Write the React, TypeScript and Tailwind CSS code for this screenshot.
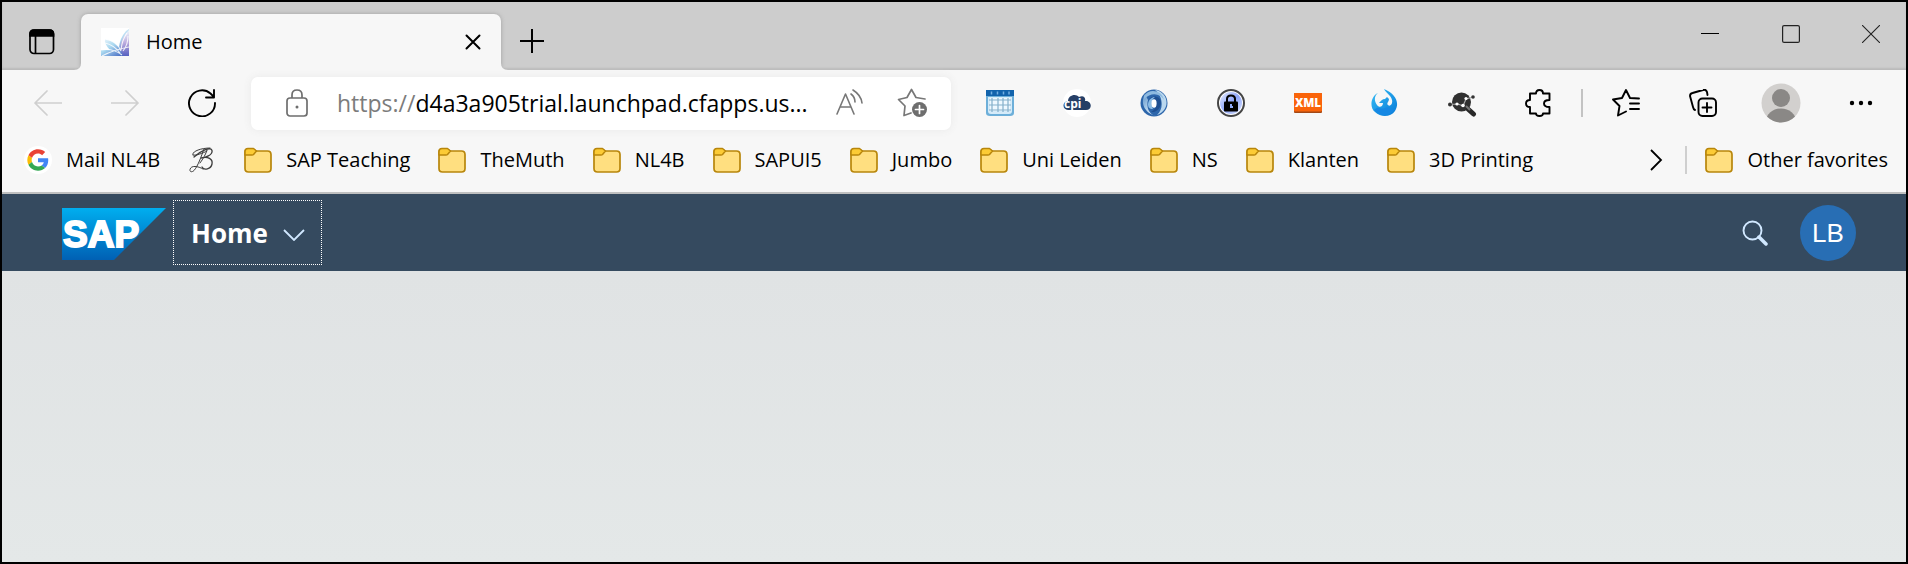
import type { ReactNode } from "react";

const folders = ["SAP Teaching", "TheMuth", "NL4B", "SAPUI5", "Jumbo", "Uni Leiden", "NS", "Klanten", "3D Printing"];

function FolderIcon() {
  return (
    <svg width="28" height="26" viewBox="0 0 28 26" className="shrink-0" aria-hidden="true">
      <path d="M1 5Q1 2 4 2H9L12 4H23.500Q27 4 27 7.500V21.500Q27 25 23.500 25H4.500Q1 25 1 21.500Z" fill="#ffdf80" stroke="#b8860b" strokeWidth="1.700" />
      <path d="M1 4.500Q1 1.500 4 1.500H9.500L12.500 4L9.500 7.500Q9 8 8 8H1Z" fill="#fccb35" stroke="#b8860b" strokeWidth="1.500" strokeLinejoin="round" />
    </svg>
  );
}

function GoogleIcon() {
  return (
    <svg width="28" height="28" viewBox="0 0 28 28" className="shrink-0" aria-hidden="true">
      <circle cx="14" cy="14" r="14" fill="#fff" />
      <g transform="translate(3.300 3.300) scale(.446)">
        <path fill="#EA4335" d="M24 9.500c3.540 0 6.710 1.220 9.210 3.600l6.850-6.850C35.900 2.380 30.470 0 24 0 14.620 0 6.510 5.380 2.560 13.220l7.980 6.190C12.430 13.720 17.740 9.500 24 9.500z" />
        <path fill="#4285F4" d="M46.980 24.550c0-1.570-.15-3.090-.38-4.550H24v9.020h12.940c-.58 2.960-2.260 5.480-4.780 7.180l7.730 6c4.510-4.180 7.090-10.360 7.090-17.650z" />
        <path fill="#FBBC05" d="M10.530 28.590c-.48-1.450-.76-2.990-.76-4.590s.27-3.140.76-4.590l-7.980-6.190C.92 16.460 0 20.120 0 24c0 3.880.92 7.540 2.560 10.780l7.970-6.190z" />
        <path fill="#34A853" d="M24 48c6.480 0 11.930-2.130 15.890-5.810l-7.730-6c-2.150 1.450-4.920 2.300-8.160 2.300-6.260 0-11.570-4.220-13.470-9.910l-7.980 6.190C6.510 42.620 14.620 48 24 48z" />
      </g>
    </svg>
  );
}

function ScriptBIcon() {
  return (
    <svg width="28" height="28" viewBox="0 0 28 28" fill="none" stroke="#3d3d3d" strokeWidth="1" strokeLinecap="round" aria-hidden="true">
      <path d="M5 9C3 6 12 2 22 2M16 3C13 11 10 20 6 24.500C4 26.500 1.500 26 2 23.500C3 19 10 20 15 23" />
      <path d="M6 11C12 5 23 0 24 4.500C25 9 17 12 13 12C20 10 25 13 24 18C23 23 16 25 14 21" strokeWidth="1.300" />
      <path d="M19 4C18 8 15 13 12 17M5 9C8 10 15 7 19 5" />
    </svg>
  );
}

function ToolButton({ label, children, disabled, wide }: { label: string; children: ReactNode; disabled?: boolean; wide?: boolean }) {
  return (
    <button type="button" aria-label={label} disabled={disabled} className={`flex h-14 shrink-0 items-center justify-center ${wide ? "w-20" : "w-[77px]"}`}>
      {children}
    </button>
  );
}

function Line({ children, size = 28, color = "#000", width = 1.7 }: { children: ReactNode; size?: number; color?: string; width?: number }) {
  return (
    <svg width={size} height={size} viewBox={`0 0 ${size} ${size}`} fill="none" stroke={color} strokeWidth={width} strokeLinecap="round" strokeLinejoin="round" aria-hidden="true">
      {children}
    </svg>
  );
}

function TitleBar() {
  return (
    <div className="flex h-[68px] bg-[#cdcdcd] shadow-[inset_0_-2px_2px_#bababa]">
      <button type="button" aria-label="Tab actions" className="flex w-[79px] items-center justify-center pt-3">
        <svg width="26" height="26" viewBox="0 0 26 26" fill="none" stroke="#000" strokeWidth="1.700" aria-hidden="true">
          <rect x="1" y="1" width="23.500" height="23.500" rx="4" />
          <path d="M1 7V5Q1 1 5 1H20.500Q24.500 1 24.500 5V7Z" fill="#000" />
          <path d="M6.500 7V24" />
        </svg>
      </button>
      <div className="relative mt-3 flex w-[420px] items-center rounded-t-[7px] bg-[#f7f7f7] pl-5 pr-4 shadow-[0_0_4px_#a0a0a0] [clip-path:inset(-5px_-7px_0_-7px)]">
        <svg width="7" height="7" viewBox="0 0 7 7" className="absolute -left-[7px] bottom-0" aria-hidden="true"><path d="M7 0V7H0Q7 7 7 0Z" fill="#f7f7f7" /></svg>
        <svg width="7" height="7" viewBox="0 0 7 7" className="absolute -right-[7px] bottom-0" aria-hidden="true"><path d="M0 0V7H7Q0 7 0 0Z" fill="#f7f7f7" /></svg>
        <svg width="28" height="28" viewBox="0 0 28 28" aria-hidden="true">
          <defs>
            <linearGradient id="tabFade" x1="0" y1="0" x2="0.700" y2="1">
              <stop offset=".2" stopColor="#fff" />
              <stop offset=".6" stopColor="#a9d8f0" />
              <stop offset="1" stopColor="#4b6fc4" />
            </linearGradient>
            <linearGradient id="tabPurple" x1="0" y1="0" x2="0" y2="1">
              <stop offset="0" stopColor="#fff" />
              <stop offset=".5" stopColor="#c8a8dd" />
              <stop offset="1" stopColor="#5a5fc0" />
            </linearGradient>
          </defs>
          <rect width="28" height="28" fill="#fff" />
          <path d="M0 28V22Q5 22 9 22Q3 16 4 11Q12 12 18 19Q19 10 25 3L28 1V28Z" fill="url(#tabFade)" />
          <path d="M19 20Q20 9 28 2V28H22Z" fill="url(#tabPurple)" opacity=".8" />
          <path d="M4 11Q16 13 20 23M4 15Q13 17 19 25M0 22Q12 20 21 27M20 22Q21 12 26 5M22 23Q27 17 27 8M1 28Q12 22 28 19" fill="none" stroke="#fff" strokeWidth="1.100" opacity=".85" />
        </svg>
        <span className="ml-[17px] flex-1 text-[20px] leading-7">Home</span>
        <button type="button" aria-label="Close tab" className="flex size-6 items-center justify-center">
          <Line size={16} width={2}><path d="M1.500 1.500L14.500 14.500M14.500 1.500L1.500 14.500" /></Line>
        </button>
      </div>
      <button type="button" aria-label="New tab" className="flex w-[62px] items-center justify-center pt-2.5">
        <Line size={24} width={2}><path d="M12 0V24M0 12H24" /></Line>
      </button>
      <div className="ml-auto flex items-start">
        <button type="button" aria-label="Minimize" className="flex h-16 w-[72px] items-center justify-center"><Line size={18} width={1}><path d="M0 8.500H18" /></Line></button>
        <button type="button" aria-label="Maximize" className="flex h-16 w-[90px] items-center justify-center"><Line size={18} width={1.2} color="#222"><rect x=".6" y=".6" width="16.800" height="16.800" rx="1.500" /></Line></button>
        <button type="button" aria-label="Close window" className="flex h-16 w-[70px] items-center justify-center"><Line size={18} width={1.1} color="#222"><path d="M0 0L18 18M18 0L0 18" /></Line></button>
      </div>
    </div>
  );
}

function ExtensionIcons() {
  return (
    <>
      <ToolButton label="Calendar">
        <svg width="28" height="28" viewBox="0 0 28 28" aria-hidden="true">
          <path d="M0 2H28V24Q28 27 24 27H4Q0 27 0 24Z" fill="#6dafd9" />
          <path d="M2 8H26V22Q26 25 23 25H5Q2 25 2 22Z" fill="#d5ebf9" />
          <path d="M0 1H28V7H0Z" fill="#1263ac" />
          <path d="M5.500 2.500V5.500M11.500 2.500V5.500M17.500 2.500V5.500M23 2.500V5.500" stroke="#73afe1" strokeWidth="1.500" />
          <path d="M4 9H24V22H4Z" fill="#eef8ff" />
          <path d="M3 11H25M3 16H25M3 21H25M6 9V23M12 9V23M17 9V23M22 9V23" stroke="#84b0cb" strokeWidth="1.200" />
        </svg>
      </ToolButton>
      <ToolButton label="CPI helper">
        <svg width="28" height="28" viewBox="0 0 28 28" aria-hidden="true">
          <circle cx="14" cy="14" r="14" fill="#fff" />
          <path d="M5 21C-1 21-1 12 5 12C5 6 13 4 16 8C20 6 23 8 22 12C29 11 30 21 23 21Z" fill="#263f66" />
          <text x="1" y="19" fontFamily="Open Sans, sans-serif" fontWeight="700" fontSize="12" fill="#fff">cpi</text>
        </svg>
      </ToolButton>
      <ToolButton label="JSON viewer">
        <svg width="28" height="28" viewBox="0 0 28 28" aria-hidden="true">
          <defs><linearGradient id="jsonRing" x1="0" y1="0" x2=".8" y2="1"><stop stopColor="#5d92c9" /><stop offset=".5" stopColor="#a9cbe8" /><stop offset="1" stopColor="#f2f9ff" /></linearGradient></defs>
          <circle cx="14" cy="14" r="13.500" fill="#2d66ab" />
          <path d="M15 1C29 3 31 21 17 26C24 20 23 7 15 1Z" fill="#bad8ef" />
          <path d="M5 5C0 13 4 24 16 27C9 26 6 18 8 11Z" fill="url(#jsonRing)" />
          <path d="M4 7C9-1 22 1 24 11C20 4 11 3 4 10Z" fill="#8ebae0" />
          <path d="M7 17C7 9 14 5 19 9C24 14 19 24 11 23C18 20 17 10 13 9C9 9 7 13 7 17Z" fill="#1e4f91" />
          <path d="M8 15C9 10 12 8 15 8C11 10 11 16 13 20C9 20 8 18 8 15Z" fill="#8bbce5" />
          <ellipse cx="14" cy="14.500" rx="2.600" ry="4.200" fill="#fff" />
        </svg>
      </ToolButton>
      <ToolButton label="Password manager">
        <svg width="28" height="28" viewBox="0 0 28 28" aria-hidden="true">
          <defs><linearGradient id="lockBlue" x1="0" y1="0" x2="1" y2="1"><stop stopColor="#e9eeff" /><stop offset=".5" stopColor="#8ea5f8" /><stop offset="1" stopColor="#dbe4ff" /></linearGradient></defs>
          <circle cx="14" cy="14" r="13" fill="#fff" stroke="#454545" strokeWidth="2" />
          <circle cx="14" cy="14" r="11" fill="url(#lockBlue)" />
          <path d="M10 13V10Q10 6.500 14 6.500T18 10V13" fill="none" stroke="#000" strokeWidth="2" />
          <rect x="7" y="12.500" width="14" height="10" rx="1" fill="#000" />
          <path d="M14 15V19M14 18H16" stroke="#8eaafa" strokeWidth="2" />
        </svg>
      </ToolButton>
      <ToolButton label="XML tools">
        <svg width="28" height="28" viewBox="0 0 28 28" aria-hidden="true">
          <rect y="4" width="28" height="20" rx="1" fill="#a34816" /><rect y="4" width="28" height="18.500" rx="1" fill="#fa640a" />
          <text x="14" y="18" textAnchor="middle" fontFamily="Open Sans, sans-serif" fontWeight="800" fontSize="11.500" fill="#fff">XML</text>
        </svg>
      </ToolButton>
      <ToolButton label="Phoenix">
        <svg width="28" height="28" viewBox="0 0 28 28" aria-hidden="true">
          <defs><linearGradient id="bird" x1="0" y1="0" x2="1" y2="1"><stop stopColor="#36bdf5" /><stop offset="1" stopColor="#087bd8" /></linearGradient></defs>
          <path d="M7 4C0 7-2 18 4 23C10 29 20 28 24 22C29 14 25 5 13 0C15 4 20 6 21 11C22 15 19 18 17 16C15 14 18 13 18 10L16 8L14 10C11 10 10 12 8 14L12 14C12 18 8 19 6 16C3 12 3 7 7 4Z" fill="url(#bird)" />
          <path d="M3 21C8 16 9 21 14 19C19 16 20 22 24 20C19 28 8 28 3 21Z" fill="#1688e3" />
        </svg>
      </ToolButton>
      <ToolButton label="Network inspector">
        <svg width="30" height="28" viewBox="0 0 30 28" aria-hidden="true">
          <circle cx="14.500" cy="13" r="9.500" fill="#303030" />
          <path d="M21.500 20.500L26.500 25" stroke="#282828" strokeWidth="5" strokeLinecap="round" /><path d="M19 17L23 21" stroke="#777" strokeWidth="2" />
          <path d="M2 15.500L11 15L16 17L19 10L26 8" stroke="#aaa" strokeWidth="1.200" fill="none" />
          <circle cx="3" cy="15.500" r="2" fill="#333" /><circle cx="26" cy="8" r="1.800" fill="#333" /><circle cx="10" cy="15" r="1.600" fill="#fff" /><circle cx="16" cy="16.500" r="1.800" fill="#fff" /><circle cx="19" cy="9.500" r="1.600" fill="#fff" />
        </svg>
      </ToolButton>
      <ToolButton label="Extensions">
        <Line width={1.9}><path d="M5 4.500H11C11 2 12 1 14.500 1S18 2 18 4.500H24.500V11C21 11 19 12 19 14.500S21 18 24.500 18V24.500H18C18 26 17 27 14.500 27S11 26 11 24.500H5V18C2.500 18 1 17 1 14.500S2.500 11 5 11Z" /></Line>
      </ToolButton>
    </>
  );
}

function Toolbar() {
  return (
    <div className="flex h-[66px] items-center pl-[7px] pr-[5px]">
      <ToolButton label="Back" disabled><Line color="#cfcfcf"><path d="M27.500 14H1M13 2L1 14L13 26" /></Line></ToolButton>
      <ToolButton label="Forward" disabled><Line color="#cfcfcf"><path d="M.5 14H27M15 2L27 14L15 26" /></Line></ToolButton>
      <ToolButton label="Reload"><Line width={1.9}><path d="M27 14A13 13 0 1 1 22.500 4.500L26 8M26 1V8.500H18" /></Line></ToolButton>
      <div className="ml-[11px] flex h-[53px] min-w-0 flex-1 items-center rounded-[7px] bg-white pl-[35px] pr-[22px] shadow-[0_0_8px_#e9e9e9]">
        <svg width="22" height="28" viewBox="0 0 22 28" fill="none" stroke="#6e6e6e" strokeWidth="1.700" className="shrink-0" aria-hidden="true">
          <rect x="1" y="9" width="20" height="18" rx="3" /><path d="M6 9V6Q6 1 11 1T16 6V9" /><circle cx="11" cy="18" r="1.500" fill="#6e6e6e" stroke="none" />
        </svg>
        <label htmlFor="address" className="ml-[29px] text-[23px] leading-8 text-[#7c7c7c]">https://</label>
        <input id="address" type="text" defaultValue="d4a3a905trial.launchpad.cfapps.us..." className="min-w-0 flex-1 bg-transparent text-[23px] leading-8 text-black outline-none" />
        <button type="button" aria-label="Read aloud" className="shrink-0">
          <Line color="#777" width={1.6}><path d="M1 25L9.500 5L18 25M4.500 18H14.500M15 5Q19 8 19 13M17 1Q25 6 26 14" /></Line>
        </button>
        <button type="button" aria-label="Add to favorites" className="ml-[33px] shrink-0">
          <svg width="32" height="30" viewBox="0 0 32 30" fill="none" stroke="#777" strokeWidth="1.700" strokeLinejoin="round" strokeLinecap="round" aria-hidden="true">
            <path d="M14 25L7 27.500L8 18L1.500 11.500L10 9.500L14.500 1.500L19 9.500L28 11" /><circle cx="22.500" cy="21.500" r="7.500" fill="#6e6e6e" stroke="none" /><path d="M22.500 17.500V25.500M18.500 21.500H26.500" stroke="#fff" />
          </svg>
        </button>
      </div>
      <div className="ml-[10px] flex items-center">
        <ExtensionIcons />
        <span className="ml-1 mr-1 h-7 w-0.5 bg-[#c3c3c3]" />
        <ToolButton label="Favorites"><Line width={1.9}><path d="M14 22.500L6 26.500L7.500 17L1 10.500L10 9L14 1L18 9L27 9.500M18 14.500H27M18 20H27" /></Line></ToolButton>
        <ToolButton label="Collections"><Line width={1.9}><rect x="9.500" y="9.500" width="17.500" height="17.500" rx="4" /><path d="M18 14V23M13.500 18.500H22.500M6 21Q4.500 20.500 4 18L1 7Q1 4.500 3.500 4L14 1Q17 0 18 3L18.500 6" /></Line></ToolButton>
        <ToolButton label="Profile" wide>
          <svg width="40" height="40" viewBox="0 0 40 40" aria-hidden="true">
            <defs><clipPath id="profileClip"><circle cx="20" cy="20" r="19.500" /></clipPath></defs>
            <circle cx="20" cy="20" r="19.500" fill="#d2d0ce" /><circle cx="20" cy="15" r="9" fill="#8a8886" /><ellipse cx="20" cy="38" rx="15" ry="12.500" fill="#8a8886" clipPath="url(#profileClip)" />
          </svg>
        </ToolButton>
        <ToolButton label="Settings and more" wide><svg width="24" height="6" viewBox="0 0 24 6" aria-hidden="true"><circle cx="3" cy="3" r="2.200" /><circle cx="12" cy="3" r="2.200" /><circle cx="21" cy="3" r="2.200" /></svg></ToolButton>
      </div>
    </div>
  );
}

function BookmarkBar() {
  return (
    <nav aria-label="Favorites" className="flex h-[56px] items-center whitespace-nowrap pb-2 pl-[22px] pr-[18px] text-[20px] leading-7">
      <a href="#mail" className="flex items-center gap-[14px]"><GoogleIcon />Mail NL4B</a>
      <a href="#blog" aria-label="Blog" className="ml-7"><ScriptBIcon /></a>
      <div className="ml-7 flex gap-7">
        {folders.map((name) => <button key={name} type="button" className="flex items-center gap-[14px]"><FolderIcon />{name}</button>)}
      </div>
      <button type="button" aria-label="More favorites" className="ml-auto mr-[22px]"><svg width="13" height="22" viewBox="0 0 13 22" fill="none" stroke="#000" strokeWidth="1.800" aria-hidden="true"><path d="M1 1L11 11L1 21" /></svg></button>
      <span className="mr-[18px] h-7 w-0.5 bg-[#cfcfcf]" />
      <button type="button" className="flex items-center gap-[14px]"><FolderIcon />Other favorites</button>
    </nav>
  );
}

function ShellHeader() {
  return (
    <header className="flex h-[79px] items-center border-t-2 border-[#bfc0c0] bg-[#354a5f] pl-[60px] pr-[50px]">
      <svg width="104" height="52" viewBox="0 0 104 52" role="img" aria-label="SAP" className="mt-0.5 shrink-0">
        <defs><linearGradient id="sapBlue" x1="0" y1="0" x2="0" y2="1"><stop stopColor="#00aeef" /><stop offset="1" stopColor="#0060b4" /></linearGradient></defs>
        <path d="M0 0H104L52 52H0Z" fill="url(#sapBlue)" />
        <text x="1" y="39" fontFamily="Liberation Sans, Arial, sans-serif" fontWeight="700" fontSize="37" fill="#fff" stroke="#fff" strokeWidth="2">SAP</text>
      </svg>
      <button type="button" className="ml-[7px] flex h-[65px] items-center gap-[15px] border border-dotted border-white pl-[17px] pr-4 text-[26px] font-bold leading-8 text-white">
        Home
        <svg width="22" height="12" viewBox="0 0 22 12" fill="none" stroke="#d1e8ff" strokeWidth="1.800" className="mt-1" aria-hidden="true"><path d="M1 1L11 11L21 1" /></svg>
      </button>
      <button type="button" aria-label="Search" className="ml-auto">
        <svg width="26" height="26" viewBox="0 0 26 26" fill="none" stroke="#d1e8ff" aria-hidden="true"><circle cx="10.500" cy="10.500" r="9" strokeWidth="1.900" /><path d="M17 17L24 24" strokeWidth="3.500" strokeLinecap="round" /></svg>
      </button>
      <button type="button" aria-label="User menu" className="ml-8 flex size-14 items-center justify-center rounded-full bg-[#286eb4] font-['Liberation_Sans',Arial,sans-serif] text-[26px] leading-8 text-white">LB</button>
    </header>
  );
}

export default function App() {
  return (
    <div className="flex min-h-screen flex-col border-2 border-black bg-[#f7f7f7] font-['Open_Sans','Noto_Sans',sans-serif] text-black">
      <TitleBar />
      <Toolbar />
      <BookmarkBar />
      <ShellHeader />
      <main className="flex-1 bg-linear-to-b from-[#e0e3e4] to-[#e4e8e8]" />
    </div>
  );
}
